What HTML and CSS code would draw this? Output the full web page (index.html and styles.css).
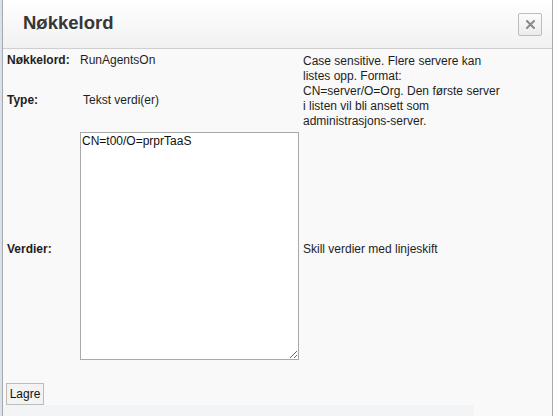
FILE: index.html
```html
<!DOCTYPE html>
<html lang="no">
<head>
<meta charset="utf-8">
<title>Nøkkelord</title>
<link rel="stylesheet" href="styles.css">
</head>
<body>
<div class="dialog">
  <div class="dialog-header">
    <h1 class="dialog-title">Nøkkelord</h1>
    <button class="close-btn" type="button" aria-label="Lukk">
      <svg width="9" height="9" viewBox="0 0 9 9"><path d="M1 1 L8 8 M8 1 L1 8" stroke="#8a8a8a" stroke-width="2" stroke-linecap="square"/></svg>
    </button>
  </div>
  <div class="dialog-body">
    <div class="form-grid">
      <div class="label r1">Nøkkelord:</div>
      <div class="value r1">RunAgentsOn</div>
      <div class="desc desc-top">Case sensitive. Flere servere kan listes opp. Format: CN=server/O=Org. Den første server i listen vil bli ansett som administrasjons-server.</div>
      <div class="label r2">Type:</div>
      <div class="value value-type r2">Tekst verdi(er)</div>
      <div class="label r3 mid">Verdier:</div>
      <div class="value r3"><textarea class="values">CN=t00/O=prprTaaS</textarea></div>
      <div class="desc r3 mid">Skill verdier med linjeskift</div>
    </div>
    <div class="actions">
      <button class="save-btn" type="button">Lagre</button>
    </div>
    <div class="strip"></div>
  </div>
</div>
</body>
</html>
```
FILE: styles.css
```css
html, body {
  margin: 0;
  padding: 0;
  height: 100%;
}
body {
  background: linear-gradient(to right, #d9e2ec 0, #d9e2ec 2px, #ffffff 2px);
  font-family: "Liberation Sans", Arial, sans-serif;
  font-size: 12px;
  color: #1e1e1e;
  overflow: hidden;
}
.dialog {
  margin-left: 2px;
  width: 549px;
  height: 416px;
  border-left: 1px solid #a9a9a9;
  border-right: 1px solid #a9a9a9;
  display: flex;
  flex-direction: column;
  background: #f9f9f9;
}
.dialog-header {
  height: 48px;
  border-bottom: 1px solid #cfcfcf;
  background: linear-gradient(to bottom, #ffffff, #f1f1f1);
  display: flex;
  align-items: center;
  justify-content: space-between;
  padding: 0 10px 0 20px;
  flex: none;
}
.dialog-title {
  margin: 0;
  font-size: 18.5px;
  font-weight: bold;
  color: #363636;
  padding-bottom: 2px;
}
.close-btn {
  width: 24px;
  height: 23px;
  padding: 0;
  border: 1px solid #bdbdbd;
  border-radius: 2px;
  background: linear-gradient(to bottom, #fbfbfb, #ececec);
  display: flex;
  align-items: center;
  justify-content: center;
}
.close-btn svg { display: block; }
.dialog-body {
  flex: 1;
  display: flex;
  flex-direction: column;
  padding-top: 4px;
}
.form-grid {
  display: grid;
  grid-template-columns: 73px 223px 1fr;
  grid-template-rows: 40px 39px auto;
  padding-left: 4px;
  line-height: 15px;
}
.label {
  font-weight: bold;
  grid-column: 1;
}
.value { grid-column: 2; }
.value-type { padding-left: 3px; }
.r1 { grid-row: 1; }
.r2 { grid-row: 2; }
.r3 { grid-row: 3; }
.desc { grid-column: 3; }
.desc-top {
  grid-row: 1 / span 2;
  padding-right: 50px;
  margin-top: 1px;
}
.mid {
  align-self: center;
  padding-top: 6px;
}
.values {
  display: block;
  box-sizing: border-box;
  width: 219px;
  height: 228px;
  margin: 0;
  border: 1px solid #a9a9a9;
  padding: 1px 1px;
  font-family: "Liberation Sans", Arial, sans-serif;
  font-size: 12px;
  color: #111;
  background: #fff;
}
.actions {
  margin-top: 23px;
  padding-left: 3px;
  display: flex;
}
.save-btn {
  height: 22px;
  width: 38px;
  padding: 0;
  border: 1px solid #bcbcbc;
  background: #f3f3f3;
  font-family: "Liberation Sans", Arial, sans-serif;
  font-size: 12px;
  color: #111;
}
.strip {
  width: 471px;
  flex: 1;
  background: #f3f4f6;
}
```
